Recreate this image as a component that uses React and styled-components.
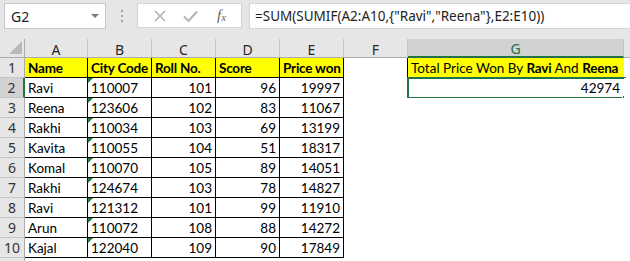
import styled, { createGlobalStyle } from "styled-components";

const GlobalStyle = createGlobalStyle`
    html, body {
        margin: 0;
        padding: 0;
        background: #ffffff;
        overflow: hidden;
    }
`

const columns = ["A", "B", "C", "D", "E", "F", "G", ""];

const headers = ["Name", "City Code", "Roll No.", "Score", "Price won"];

const rows = [
    ["Ravi", "110007", 101, 96, 19997],
    ["Reena", "123606", 102, 83, 11067],
    ["Rakhi", "110034", 103, 69, 13199],
    ["Kavita", "110055", 104, 51, 18317],
    ["Komal", "110070", 105, 89, 14051],
    ["Rakhi", "124674", 103, 78, 14827],
    ["Ravi", "121312", 101, 99, 11910],
    ["Arun", "110072", 108, 88, 14272],
    ["Kajal", "122040", 109, 90, 17849],
];

export default function App() {
    return (
        <Window>
            <GlobalStyle />
            <FormulaBar>
                <NameBox>
                    <span>G2</span>
                    <DropArrow />
                </NameBox>
                <Grip>
                    <i /><i /><i />
                </Grip>
                <ButtonBox>
                    <ToolIcon>
                        <svg width="12" height="12" viewBox="0 0 12 12">
                            <path d="M1 1 L11 11 M11 1 L1 11" stroke="#b4b4b4" strokeWidth="1.6" fill="none" />
                        </svg>
                    </ToolIcon>
                    <ToolIcon>
                        <svg width="15" height="12" viewBox="0 0 15 12">
                            <path d="M1 6.5 L5.5 11 L14 1.5" stroke="#b4b4b4" strokeWidth="2" fill="none" />
                        </svg>
                    </ToolIcon>
                    <Fx>f<sub>x</sub></Fx>
                </ButtonBox>
                <FormulaInput>=SUM(SUMIF(A2:A10,{"{"}"Ravi","Reena"{"}"},E2:E10))</FormulaInput>
            </FormulaBar>

            <Sheet>
                <Corner><CornerMark /></Corner>
                {columns.map((c, i) => (
                    <ColHeader key={i} $active={c === "G"} $last={c === ""}>{c}</ColHeader>
                ))}

                <RowHeader>1</RowHeader>
                {headers.map((h, i) => (
                    <Cell key={i} $table $fill="#ffff00" $bold>{h}</Cell>
                ))}
                <Cell />
                <Cell $fill="#ffff00" $leftLine>
                    Total Price Won By&nbsp;<b>Ravi</b>&nbsp;And&nbsp;<b>Reena</b>
                </Cell>
                <Cell />

                {rows.map((r, i) => (
                    <Row key={i} index={i + 2} data={r} />
                ))}

                <RowHeader />
            </Sheet>
        </Window>
    )
};

function Row({ index, data }) {
    const selected = index === 2;
    return (
        <>
            <RowHeader $active={selected}>{index}</RowHeader>
            <Cell $table>{data[0]}</Cell>
            <Cell $table $flag>{data[1]}</Cell>
            <Cell $table $right>{data[2]}</Cell>
            <Cell $table $right>{data[3]}</Cell>
            <Cell $table $right>{data[4]}</Cell>
            <Cell />
            {selected ? (
                <Cell $right $selected>
                    42974
                    <Selection><FillHandle /></Selection>
                </Cell>
            ) : (
                <Cell />
            )}
            <Cell />
        </>
    )
}

const Window = styled.div`
    width: 630px;
    height: 261px;
    overflow: hidden;
    background: #ffffff;
`
const FormulaBar = styled.div`
    height: 39px;
    box-sizing: border-box;
    background: #e6e6e6;
    display: flex;
    align-items: flex-start;
    padding: 3px 0 0 4px;
    font-family: "Noto Sans", "Open Sans", sans-serif;
`
const NameBox = styled.div`
    width: 102px;
    height: 26px;
    box-sizing: border-box;
    background: #ffffff;
    border: 1px solid #c6c6c6;
    display: flex;
    align-items: center;
    justify-content: space-between;
    padding: 0 6px 0 6px;
    font-size: 14px;
    color: #222222;
`
const DropArrow = styled.div`
    width: 0;
    height: 0;
    border-left: 4px solid transparent;
    border-right: 4px solid transparent;
    border-top: 4px solid #7a7a7a;
`
const Grip = styled.div`
    width: 31px;
    display: flex;
    flex-direction: column;
    align-items: center;
    gap: 3px;
    padding-top: 7px;

    i {
        width: 2px;
        height: 2px;
        background: #a0a0a0;
    }
`
const ButtonBox = styled.div`
    width: 105px;
    height: 25px;
    box-sizing: border-box;
    background: #ffffff;
    border: 1px solid #d4d4d4;
    display: flex;
    align-items: center;
    justify-content: space-around;
    padding: 0 4px 0 6px;
`
const ToolIcon = styled.div`
    width: 30px;
    display: flex;
    align-items: center;
    justify-content: center;
`
const Fx = styled.div`
    width: 30px;
    text-align: center;
    font-family: "Liberation Serif", serif;
    font-style: italic;
    font-size: 15px;
    color: #666666;
    line-height: 1;

    sub {
        font-size: 11px;
        vertical-align: baseline;
        position: relative;
        top: 1px;
    }
`
const FormulaInput = styled.div`
    flex: 1;
    height: 26px;
    box-sizing: border-box;
    margin-left: 7px;
    margin-right: -4px;
    background: #ffffff;
    border: 1px solid #d4d4d4;
    padding-left: 5px;
    display: flex;
    align-items: center;
    font-size: 13.5px;
    color: #222222;
    white-space: nowrap;
`
const Sheet = styled.div`
    display: grid;
    grid-template-columns: 25px 63px 64px 64px 64px 64px 64px 216px 1fr;
    grid-template-rows: 19px;
    grid-auto-rows: 20px;
    font-family: "Lato", "Liberation Sans", sans-serif;
    font-size: 13.5px;
    color: #000000;
`
const Corner = styled.div`
    background: #e6e6e6;
    border-right: 1px solid #ababab;
    border-bottom: 1px solid #ababab;
    box-sizing: border-box;
    display: flex;
    align-items: flex-end;
    justify-content: flex-end;
    padding: 0 2px 3px 0;
`
const CornerMark = styled.div`
    width: 0;
    height: 0;
    border-left: 13px solid transparent;
    border-bottom: 13px solid #b9b9b9;
`
const ColHeader = styled.div`
    box-sizing: border-box;
    background: ${props => props.$active ? '#d2d2d2' : '#e6e6e6'};
    border-right: ${props => props.$last ? 'none' : '1px solid #c4c4c4'};
    border-bottom: ${props => props.$active ? '2px solid #217346' : '1px solid #ababab'};
    display: flex;
    align-items: center;
    justify-content: center;
    font-family: "Noto Sans", "Open Sans", sans-serif;
    font-size: 14px;
    color: ${props => props.$active ? '#217346' : '#262626'};
    padding-top: 2px;
`
const RowHeader = styled.div`
    box-sizing: border-box;
    background: ${props => props.$active ? '#d2d2d2' : '#e6e6e6'};
    border-right: ${props => props.$active ? '2px solid #217346' : '1px solid #ababab'};
    border-bottom: 1px solid #c4c4c4;
    display: flex;
    align-items: center;
    justify-content: center;
    font-family: "Noto Sans", "Open Sans", sans-serif;
    font-size: 14px;
    color: #333333;
`
const Cell = styled.div`
    position: relative;
    box-sizing: border-box;
    background: ${props => props.$fill || '#ffffff'};
    border-right: ${props => props.$table ? '1px solid #000000' : 'none'};
    border-bottom: ${props => props.$table ? '1px solid #000000' : 'none'};
    border-left: ${props => props.$leftLine ? '1px solid #000000' : 'none'};
    margin-left: ${props => props.$leftLine ? '-1px' : '0'};
    display: flex;
    align-items: center;
    justify-content: ${props => props.$right ? 'flex-end' : 'flex-start'};
    padding: 0 3px;
    padding-right: ${props => props.$selected ? '4px' : '3px'};
    font-weight: ${props => props.$bold ? 700 : 400};
    letter-spacing: ${props => props.$bold ? '-0.2px' : '0'};
    white-space: nowrap;
    overflow: visible;

    b {
        font-weight: 700;
        letter-spacing: -0.2px;
    }

    ${props => props.$flag && `
        &::before {
            content: "";
            position: absolute;
            left: 0;
            top: 0;
            border-top: 5px solid #1d7b3f;
            border-right: 5px solid transparent;
        }
    `}
`
const Selection = styled.div`
    position: absolute;
    left: -1px;
    top: -1px;
    right: -2px;
    bottom: -1px;
    border: 2px solid #217346;
    pointer-events: none;
`
const FillHandle = styled.div`
    position: absolute;
    right: -5px;
    bottom: -5px;
    width: 5px;
    height: 5px;
    background: #217346;
    border: 1px solid #ffffff;
`
